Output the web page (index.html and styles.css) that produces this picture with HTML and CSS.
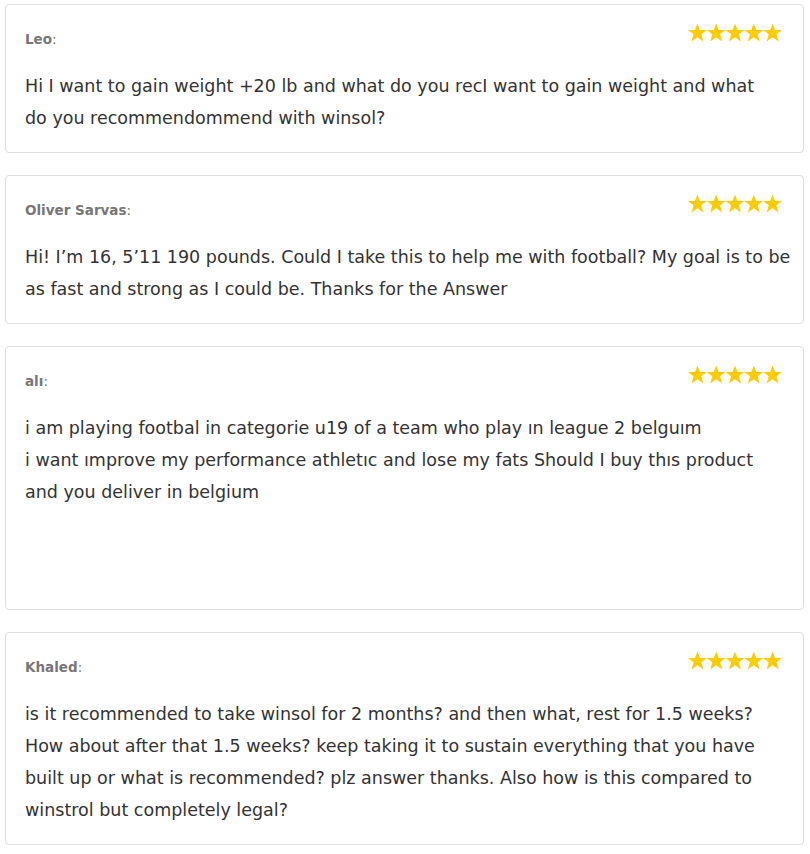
FILE: index.html
```html
<!DOCTYPE html>
<html>
<head>
<meta charset="utf-8">
<link rel="stylesheet" href="styles.css">
</head>
<body>
<div class="list">
  <div class="card">
    <div class="head">
      <div class="name"><b>Leo</b>:</div>
      <div class="stars">
        <svg viewBox="0 0 95 20" width="94" height="20"><g fill="#ffcc00"><polygon id="s" points="9.5,0.5 12,7 19,7 13.4,11.3 15.5,18.5 9.5,14.3 3.5,18.5 5.6,11.3 0,7 7,7"/><use href="#s" x="19"/><use href="#s" x="38"/><use href="#s" x="57"/><use href="#s" x="76"/></g></svg>
      </div>
    </div>
    <p class="text">Hi I want to gain weight +20 lb and what do you recI want to gain weight and what<br>do you recommendommend with winsol?</p>
  </div>
  <div class="card">
    <div class="head">
      <div class="name"><b>Oliver Sarvas</b>:</div>
      <div class="stars">
        <svg viewBox="0 0 95 20" width="94" height="20"><g fill="#ffcc00"><use href="#s"/><use href="#s" x="19"/><use href="#s" x="38"/><use href="#s" x="57"/><use href="#s" x="76"/></g></svg>
      </div>
    </div>
    <p class="text">Hi! I’m 16, 5’11 190 pounds. Could I take this to help me with football? My goal is to be<br>as fast and strong as I could be. Thanks for the Answer</p>
  </div>
  <div class="card tall">
    <div class="head">
      <div class="name"><b>alı</b>:</div>
      <div class="stars">
        <svg viewBox="0 0 95 20" width="94" height="20"><g fill="#ffcc00"><use href="#s"/><use href="#s" x="19"/><use href="#s" x="38"/><use href="#s" x="57"/><use href="#s" x="76"/></g></svg>
      </div>
    </div>
    <p class="text">i am playing footbal in categorie u19 of a team who play ın league 2 belguım<br>i want ımprove my performance athletıc and lose my fats Should I buy thıs product<br>and you deliver in belgium</p>
  </div>
  <div class="card">
    <div class="head">
      <div class="name"><b>Khaled</b>:</div>
      <div class="stars">
        <svg viewBox="0 0 95 20" width="94" height="20"><g fill="#ffcc00"><use href="#s"/><use href="#s" x="19"/><use href="#s" x="38"/><use href="#s" x="57"/><use href="#s" x="76"/></g></svg>
      </div>
    </div>
    <p class="text">is it recommended to take winsol for 2 months? and then what, rest for 1.5 weeks?<br>How about after that 1.5 weeks? keep taking it to sustain everything that you have<br>built up or what is recommended? plz answer thanks. Also how is this compared to<br>winstrol but completely legal?</p>
  </div>
</div>
</body>
</html>
```

FILE: styles.css
```css
html, body {
  margin: 0;
  padding: 0;
  background: #fff;
}
.list {
  display: flex;
  flex-direction: column;
  gap: 22px;
  padding: 4px 6px 0 5px;
}
.card {
  border: 1px solid #dedede;
  border-radius: 4px;
  padding: 18px 8px 18px 19px;
  font-family: "DejaVu Sans", sans-serif;
}
.head {
  display: flex;
  justify-content: space-between;
  align-items: flex-start;
  height: 30px;
  margin-right: 13px;
}
.name {
  font-size: 13.5px;
  color: #777;
  padding-top: 8px;
}
.name b {
  font-weight: 700;
}
.stars {
  line-height: 0;
}
.text {
  margin: 17px 0 0 0;
  font-size: 17.5px;
  line-height: 32px;
  color: #333;
  white-space: nowrap;
}
.tall {
  padding-bottom: 101px;
}
```
